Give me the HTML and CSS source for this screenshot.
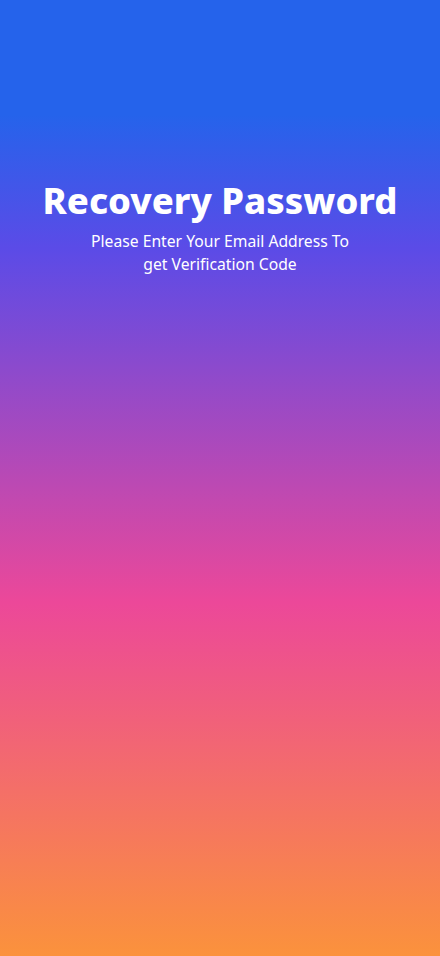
FILE: index.html
```html
<!DOCTYPE html>
<html lang="en">
<head>
<meta charset="utf-8">
<title>Recovery Password</title>
<link rel="stylesheet" href="styles.css">
</head>
<body>
<main class="screen">
  <section class="header">
    <h1 class="title">Recovery Password</h1>
    <p class="subtitle">Please Enter Your Email Address To<br>get Verification Code</p>
  </section>
</main>
</body>
</html>
```
FILE: styles.css
```css
html, body {
  margin: 0;
  padding: 0;
}
body {
  width: 440px;
  height: 956px;
  overflow: hidden;
}
.screen {
  width: 440px;
  height: 956px;
  background: linear-gradient(to bottom,
    #2563eb 0%,
    #2563eb 12%,
    #5b4be7 26%,
    #ec4899 63%,
    #fb923c 100%);
  display: flex;
  flex-direction: column;
  align-items: center;
  font-family: "Noto Sans", "Open Sans", sans-serif;
  color: #ffffff;
}
.header {
  padding-top: 175px;
  display: flex;
  flex-direction: column;
  align-items: center;
  text-align: center;
}
.title {
  margin: 0;
  font-size: 36.4px;
  font-weight: 800;
  line-height: 50px;
  letter-spacing: 0;
}
.subtitle {
  margin: 5px 0 0;
  font-size: 15.7px;
  font-weight: 400;
  line-height: 23px;
}
```
